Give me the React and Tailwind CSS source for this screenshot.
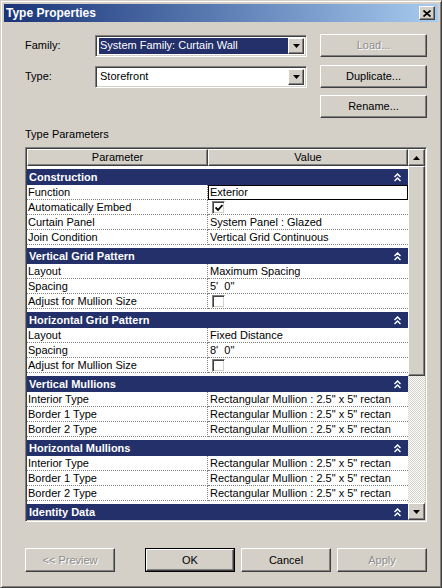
import React from 'react';

// ── Data ──────────────────────────────────────────────────────────────────────
const MULLION = 'Rectangular Mullion : 2.5" x 5" rectan';

const SECTIONS = [
  {
    title: 'Construction',
    rows: [
      { label: 'Function', value: 'Exterior', editing: true },
      { label: 'Automatically Embed', check: true },
      { label: 'Curtain Panel', value: 'System Panel : Glazed' },
      { label: 'Join Condition', value: 'Vertical Grid Continuous' },
    ],
  },
  {
    title: 'Vertical Grid Pattern',
    rows: [
      { label: 'Layout', value: 'Maximum Spacing' },
      { label: 'Spacing', value: '5\'  0"' },
      { label: 'Adjust for Mullion Size', check: false },
    ],
  },
  {
    title: 'Horizontal Grid Pattern',
    rows: [
      { label: 'Layout', value: 'Fixed Distance' },
      { label: 'Spacing', value: '8\'  0"' },
      { label: 'Adjust for Mullion Size', check: false },
    ],
  },
  {
    title: 'Vertical Mullions',
    rows: [
      { label: 'Interior Type', value: MULLION },
      { label: 'Border 1 Type', value: MULLION },
      { label: 'Border 2 Type', value: MULLION },
    ],
  },
  {
    title: 'Horizontal Mullions',
    rows: [
      { label: 'Interior Type', value: MULLION },
      { label: 'Border 1 Type', value: MULLION },
      { label: 'Border 2 Type', value: MULLION },
    ],
  },
  { title: 'Identity Data', rows: [] },
];

const raised =
  'border border-t-white border-l-white border-r-[#404040] border-b-[#404040] shadow-[inset_-1px_-1px_0_#808080] bg-[#d4d0c8]';
const sunken =
  'border border-t-[#808080] border-l-[#808080] border-r-white border-b-white shadow-[inset_1px_1px_0_#404040,inset_-1px_-1px_0_#d4d0c8]';
const disabledText = 'text-[#8c8c8c] [text-shadow:1px_1px_0_#fff]';

// ── Small pieces ──────────────────────────────────────────────────────────────
function DownArrow() {
  return (
    <svg width="7" height="4" viewBox="0 0 7 4">
      <path d="M0 0h7L3.5 4z" fill="#000" />
    </svg>
  );
}

function UpArrow() {
  return (
    <svg width="7" height="4" viewBox="0 0 7 4">
      <path d="M0 4h7L3.5 0z" fill="#000" />
    </svg>
  );
}

function Collapse() {
  return (
    <svg width="7" height="9" viewBox="0 0 7 9" fill="none" stroke="#fff" strokeWidth="1.5">
      <path d="M0.5 4L3.5 1L6.5 4" />
      <path d="M0.5 8L3.5 5L6.5 8" />
    </svg>
  );
}

function Button({ children, disabled, isDefault, className = '' }) {
  const body = (
    <div className={`${raised} h-full w-full flex items-center justify-center ${disabled ? disabledText : 'text-black'}`}>
      {children}
    </div>
  );
  return (
    <div className={`${className} ${isDefault ? 'border border-black' : ''}`}>{body}</div>
  );
}

function Combo({ value, selected }) {
  return (
    <div className={`${sunken} w-[212px] h-[22px] bg-white p-[2px] flex`}>
      <div className="flex-1 flex items-center pl-[1px]">
        <span
          className={`h-full w-full flex items-center pl-[1px] ${selected ? 'bg-[#23306a] text-white' : 'text-black'}`}
        >
          {value}
        </span>
      </div>
      <div className={`${raised} w-[16px] h-full flex items-center justify-center`}>
        <DownArrow />
      </div>
    </div>
  );
}

function CheckBox({ checked }) {
  return (
    <div className={`${sunken} w-[13px] h-[13px] bg-white flex items-center justify-center`}>
      {checked && (
        <svg width="8" height="8" viewBox="0 0 8 8">
          <path d="M0.5 3.5L3 6L7.5 1" fill="none" stroke="#000" strokeWidth="1.8" />
        </svg>
      )}
    </div>
  );
}

function Row({ row }) {
  return (
    <div className="flex h-[15px] bg-white">
      <div className="w-[181px] shrink-0 border-r border-b border-dotted border-[#808080] pl-[1px] leading-[14px] whitespace-nowrap overflow-hidden">
        {row.label}
      </div>
      <div className="flex-1 min-w-0 border-b border-dotted border-[#808080]">
        {row.editing ? (
          <div className="h-[15px] border border-black pl-[1px] leading-[13px]">{row.value}</div>
        ) : row.check !== undefined ? (
          <div className="pl-[4px] pt-[1px]">
            <CheckBox checked={row.check} />
          </div>
        ) : (
          <div className="pl-[2px] leading-[14px] whitespace-pre overflow-hidden">{row.value}</div>
        )}
      </div>
    </div>
  );
}

function Section({ section }) {
  return (
    <div className="flex flex-col">
      <div className="h-[3px] bg-white" />
      <div className="h-[16px] bg-[#23306a] text-white font-bold flex items-center justify-between pl-[2px] pr-[7px]">
        <span className="leading-[16px]">{section.title}</span>
        <Collapse />
      </div>
      {section.rows.map((row, i) => (
        <Row key={i} row={row} />
      ))}
    </div>
  );
}

// ── Main ──────────────────────────────────────────────────────────────────────
export default function App() {
  return (
    <div
      className="w-[442px] h-[588px] bg-[#d4d0c8] border border-t-[#d4d0c8] border-l-[#d4d0c8] border-r-[#404040] border-b-[#404040] shadow-[inset_1px_1px_0_#fff,inset_-1px_-1px_0_#808080] p-[3px] flex flex-col text-[11px] text-black overflow-hidden"
      style={{ fontFamily: '"Liberation Sans", Arial, sans-serif' }}
    >
      {/* title bar */}
      <div className="h-[18px] bg-gradient-to-r from-[#1b3478] to-[#a8cbf0] flex items-center justify-between pl-[2px] pr-[3px]">
        <span className="text-white font-bold text-[12px] leading-[18px]">Type Properties</span>
        <div className={`${raised} w-[16px] h-[14px] flex items-center justify-center`}>
          <svg width="8" height="7" viewBox="0 0 8 7">
            <path d="M0.5 0.5L7.5 6.5M7.5 0.5L0.5 6.5" stroke="#000" strokeWidth="1.7" />
          </svg>
        </div>
      </div>

      {/* body */}
      <div className="flex flex-col pl-[21px] pr-[11px]">
        <div className="flex items-center h-[23px] mt-[12px]">
          <span className="w-[70px]">Family:</span>
          <Combo value="System Family: Curtain Wall" selected />
          <Button disabled className="ml-auto w-[107px] h-[23px]">Load...</Button>
        </div>
        <div className="flex items-center h-[23px] mt-[8px]">
          <span className="w-[70px]">Type:</span>
          <Combo value="Storefront" />
          <Button className="ml-auto w-[107px] h-[23px]">Duplicate...</Button>
        </div>
        <div className="flex h-[23px] mt-[7px]">
          <Button className="ml-auto w-[107px] h-[23px]">Rename...</Button>
        </div>

        <div className="mt-[10px] leading-[13px]">Type Parameters</div>

        {/* parameters grid */}
        <div className={`${sunken} mt-[6px] h-[375px] p-[1px] flex bg-white`}>
          <div className="flex-1 min-w-0 flex flex-col overflow-hidden">
            <div className="flex h-[17px] shrink-0">
              <div className={`${raised} w-[181px] flex items-center justify-center`}>Parameter</div>
              <div className={`${raised} flex-1 flex items-center justify-center`}>Value</div>
            </div>
            {SECTIONS.map((s) => (
              <Section key={s.title} section={s} />
            ))}
          </div>

          {/* scrollbar */}
          <div className="w-[17px] flex flex-col">
            <div className={`${raised} h-[17px] flex items-center justify-center`}>
              <UpArrow />
            </div>
            <div className={`${raised} h-[210px]`} />
            <div className="flex-1 bg-[repeating-conic-gradient(#ffffff_0%_25%,#d4d0c8_0%_50%)] [background-size:2px_2px]" />
            <div className={`${raised} h-[17px] flex items-center justify-center`}>
              <DownArrow />
            </div>
          </div>
        </div>

        {/* bottom buttons */}
        <div className="flex h-[24px] mt-[26px]">
          <Button disabled className="w-[90px] h-[24px]">&lt;&lt; Preview</Button>
          <Button isDefault className="w-[90px] h-[24px] ml-[30px]">OK</Button>
          <Button className="w-[90px] h-[24px] ml-[6px]">Cancel</Button>
          <Button disabled className="w-[90px] h-[24px] ml-[6px]">Apply</Button>
        </div>
      </div>
    </div>
  );
}
